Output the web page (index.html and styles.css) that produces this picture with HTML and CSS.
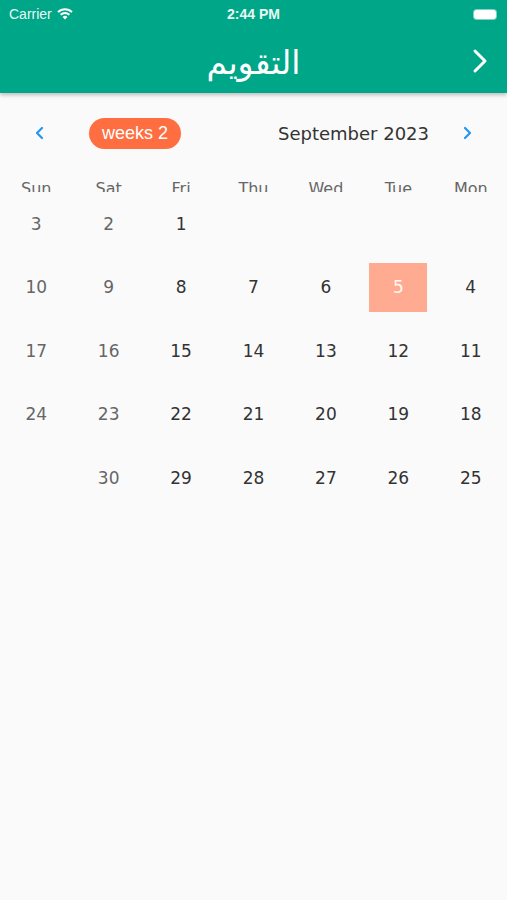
FILE: index.html
```html
<!DOCTYPE html>
<html>
<head>
  <title>التقويم</title>
  <link rel="stylesheet" href="styles.css">
</head>
<body>

<header class="appbar">
  <div class="status">
    <span class="carrier">Carrier
      <svg class="wifi" width="16" height="12" viewBox="0 0 16 12">
        <path d="M8 11.5 L5.6 8.9 A3.4 3.4 0 0 1 10.4 8.9 Z" fill="#fff"/>
        <path d="M3.6 6.8 A6.3 6.3 0 0 1 12.4 6.8" stroke="#fff" stroke-width="2" fill="none"/>
        <path d="M1 4.1 A10 10 0 0 1 15 4.1" stroke="#fff" stroke-width="2" fill="none"/>
      </svg>
    </span>
    <span class="time">2:44 PM</span>
    <span class="battery"><span class="level"></span></span>
  </div>
  <div class="nav">
    <h1 class="title">التقويم</h1>
    <svg class="nav-next" width="16" height="26" viewBox="0 0 16 26">
      <path d="M3 3 L13 13 L3 23" stroke="#fff" stroke-width="3" fill="none" stroke-linecap="round" stroke-linejoin="round"/>
    </svg>
  </div>
</header>

<div class="month-bar">
  <svg class="arrow" width="12" height="16" viewBox="0 0 12 16">
    <path d="M8 3 L3 8 L8 13" stroke="#2196f3" stroke-width="2.2" fill="none" stroke-linecap="round" stroke-linejoin="round"/>
  </svg>
  <span class="weeks">weeks 2</span>
  <span class="month">September 2023</span>
  <svg class="arrow" width="12" height="16" viewBox="0 0 12 16">
    <path d="M4 3 L9 8 L4 13" stroke="#2196f3" stroke-width="2.2" fill="none" stroke-linecap="round" stroke-linejoin="round"/>
  </svg>
</div>

<div class="weekdays">
  <span class="weekend">Sun</span>
  <span class="weekend">Sat</span>
  <span>Fri</span>
  <span>Thu</span>
  <span>Wed</span>
  <span>Tue</span>
  <span>Mon</span>
</div>

<div class="days">
  <span class="weekend">3</span><span class="weekend">2</span><span>1</span><span></span><span></span><span></span><span></span>
  <span class="weekend">10</span><span class="weekend">9</span><span>8</span><span>7</span><span>6</span><span class="selected"><b>5</b></span><span>4</span>
  <span class="weekend">17</span><span class="weekend">16</span><span>15</span><span>14</span><span>13</span><span>12</span><span>11</span>
  <span class="weekend">24</span><span class="weekend">23</span><span>22</span><span>21</span><span>20</span><span>19</span><span>18</span>
  <span></span><span class="weekend">30</span><span>29</span><span>28</span><span>27</span><span>26</span><span>25</span>
</div>

</body>
</html>
```

FILE: styles.css
```css
body {
  margin: 0;
  background: #fafafa;
  font-family: "DejaVu Sans", "Noto Sans", sans-serif;
  color: #333;
}

.appbar {
  background: #00a688;
  color: #fff;
  box-shadow: 0 2px 4px rgba(0, 0, 0, 0.25);
  position: relative;
}

.status {
  height: 28px;
  display: flex;
  align-items: center;
  justify-content: space-between;
  padding: 0 9px 0 9px;
  font-family: "Liberation Sans", sans-serif;
  font-size: 14px;
  color: #e8f7f3;
}

.carrier {
  display: flex;
  align-items: center;
  gap: 5px;
  width: 120px;
}

.time {
  font-weight: bold;
}

.battery {
  width: 120px;
  display: flex;
  justify-content: flex-end;
}

.battery .level {
  display: block;
  width: 22px;
  height: 9px;
  background: #fff;
  border-radius: 3px;
  box-shadow: 0 0 0 1px rgba(255, 255, 255, 0.5);
  margin-right: 2px;
}

.nav {
  height: 65px;
  display: flex;
  align-items: center;
  justify-content: center;
  position: relative;
}

.title {
  margin: 4px 0 0 0;
  font-size: 33px;
  font-weight: normal;
  font-family: "DejaVu Sans", sans-serif;
}

.nav-next {
  position: absolute;
  right: 19px;
  top: 20px;
}

.month-bar {
  display: flex;
  align-items: center;
  height: 40px;
  margin-top: 20px;
  padding: 0 34px;
}

.weeks {
  margin-left: 43px;
  background: #ff6e40;
  color: #fff;
  font-family: "Liberation Sans", sans-serif;
  font-size: 18px;
  padding: 0 13px;
  height: 31px;
  line-height: 31px;
  border-radius: 16px;
}

.month {
  margin-left: auto;
  margin-right: 32px;
  font-size: 18px;
  color: #333;
}

.weekdays {
  display: grid;
  grid-template-columns: repeat(7, 1fr);
  height: 22px;
  margin-top: 17px;
  overflow: hidden;
  font-size: 16px;
  color: #666;
}

.weekdays span {
  text-align: center;
  line-height: 38px;
}

.days {
  display: grid;
  grid-template-columns: repeat(7, 1fr);
  grid-auto-rows: 63.5px;
  font-size: 17px;
}

.days span {
  display: flex;
  align-items: center;
  justify-content: center;
}

.days .weekend, .weekdays .weekend {
  color: #666;
}

.days .selected b {
  font-weight: normal;
  width: 58px;
  height: 49px;
  background: #ffab91;
  color: #fff8f4;
  display: flex;
  align-items: center;
  justify-content: center;
}
```
